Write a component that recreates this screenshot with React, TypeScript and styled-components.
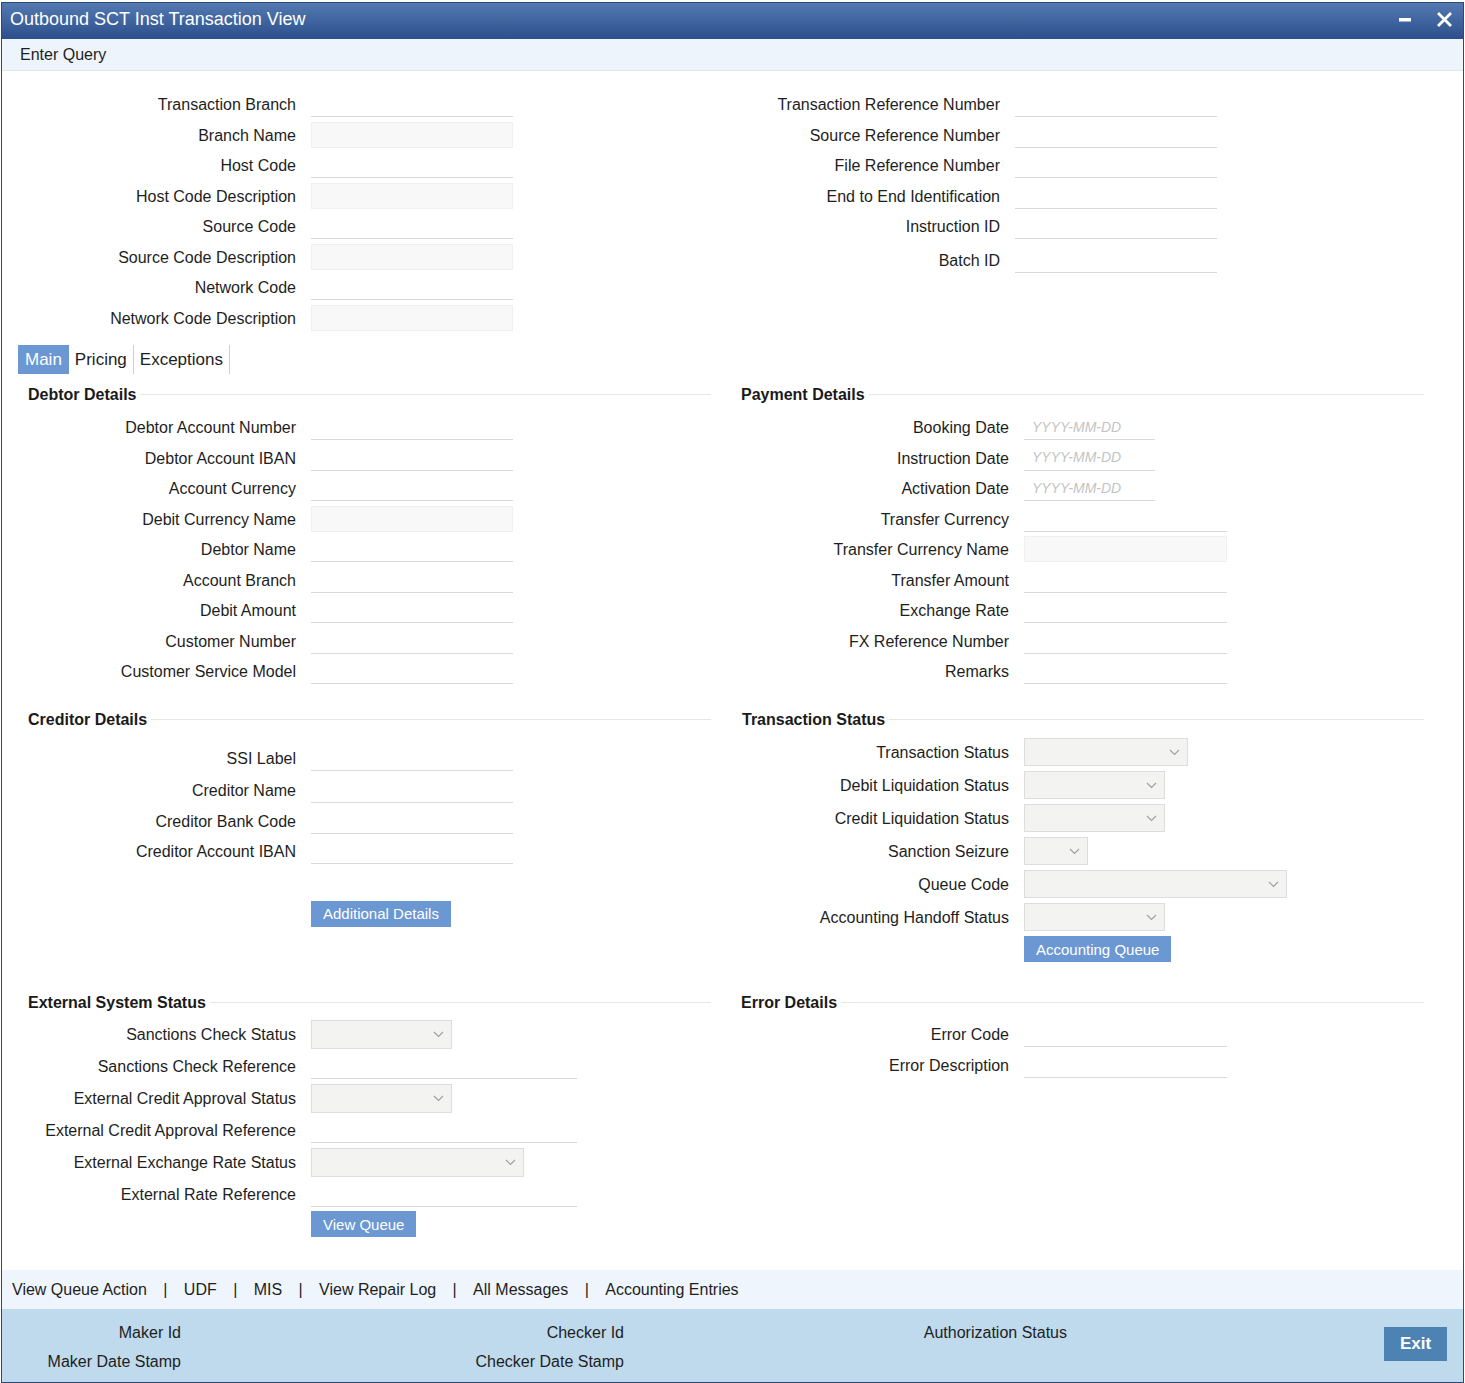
import React from 'react';
import styled, { createGlobalStyle } from 'styled-components';

const Global = createGlobalStyle`
  html, body { margin: 0; padding: 0; background: #ffffff; }
  body { font-family: "Liberation Sans", Arial, sans-serif; color: #1e1e1e; }
  * { box-sizing: border-box; }
`;

const Window = styled.div`
  margin: 2px 1px 0 1px;
  height: 1381px;
  border: 1px solid #2b4a78;
  display: flex;
  flex-direction: column;
  background: #fff;
`;

const TitleBar = styled.div`
  height: 36px;
  flex-shrink: 0;
  background: linear-gradient(#5479b2, #2c4f8b);
  display: flex;
  align-items: center;
  padding: 0 11px 0 8px;
  color: #fff;
  font-size: 18px;
`;

const TitleText = styled.div`
  flex: 1;
  margin-top: -3px;
`;

const TitleIcons = styled.div`
  display: flex;
  align-items: center;
  gap: 26px;
  margin-top: -3px;
`;

const Toolbar = styled.div`
  height: 32px;
  flex-shrink: 0;
  background: #eef4fc;
  border-bottom: 1px solid #e1e6ec;
  display: flex;
  align-items: center;
  padding-left: 18px;
  font-size: 16px;
`;

const Content = styled.div`
  flex: 1;
  padding: 18px 38px 0 16px;
`;

const TwoCol = styled.div`
  display: grid;
  grid-template-columns: 693px 693px;
  column-gap: 20px;
  align-items: start;
`;

const Column = styled.div`
  display: flex;
  flex-direction: column;
`;

const Row = styled.div<{ $labelW?: number; $h?: number; $mt?: number }>`
  display: grid;
  grid-template-columns: ${(p) => p.$labelW ?? 278}px auto;
  column-gap: 15px;
  align-items: center;
  justify-items: start;
  height: ${(p) => p.$h ?? 30.5}px;
  margin-top: ${(p) => p.$mt ?? 0}px;
`;

const Label = styled.div`
  justify-self: end;
  text-align: right;
  white-space: nowrap;
  font-size: 16px;
  padding-top: 2px;
  color: #1e1e1e;
`;

const Field = styled.input<{ $w: number; $ro?: boolean }>`
  width: ${(p) => p.$w}px;
  height: 26px;
  margin: 0;
  padding: 0 8px;
  font-family: "Liberation Sans", Arial, sans-serif;
  font-size: 14px;
  outline: none;
  border: ${(p) => (p.$ro ? '1px solid #f0f0f0' : 'none')};
  border-bottom: 1px solid ${(p) => (p.$ro ? '#efefef' : '#d9d9d9')};
  background: ${(p) => (p.$ro ? '#f8f8f8' : '#ffffff')};
  &::placeholder {
    color: #c3c3c3;
    font-style: italic;
  }
`;

const SelectBox = styled.div<{ $w: number; $h?: number }>`
  width: ${(p) => p.$w}px;
  height: ${(p) => p.$h ?? 28}px;
  background: #f3f3f2;
  border: 1px solid #dddddd;
  display: flex;
  align-items: center;
  justify-content: flex-end;
  padding-right: 7px;
`;

const Tabs = styled.div`
  display: flex;
  height: 29px;
  margin-top: 12px;
`;

const Tab = styled.div<{ $active?: boolean }>`
  display: flex;
  align-items: center;
  font-size: 17px;
  padding: 1px ${(p) => (p.$active ? 7 : 6)}px 0;
  background: ${(p) => (p.$active ? '#6b97d3' : 'transparent')};
  color: ${(p) => (p.$active ? '#ffffff' : '#1e1e1e')};
  border-right: ${(p) => (p.$active ? 'none' : '1px solid #cfcfcf')};
`;

const Section = styled.div<{ $mt: number }>`
  display: flex;
  flex-direction: column;
  margin-top: ${(p) => p.$mt}px;
`;

const SectionHeader = styled.div<{ $mb: number }>`
  display: flex;
  align-items: center;
  height: 20px;
  padding-left: 10px;
  margin-bottom: ${(p) => p.$mb}px;
`;

const Legend = styled.span<{ $ml?: number }>`
  font-size: 16px;
  font-weight: bold;
  color: #1a1a1a;
  padding-top: 2px;
  margin-left: ${(p) => p.$ml ?? 0}px;
`;

const Rule = styled.div`
  flex: 1;
  height: 1px;
  background: #e6e6e6;
  margin-left: 4px;
`;

const ButtonRow = styled.div<{ $mt: number }>`
  display: flex;
  padding-left: 293px;
  margin-top: ${(p) => p.$mt}px;
`;

const ActionButton = styled.button`
  height: 26px;
  padding: 0 12px;
  border: none;
  background: #6b97d3;
  color: #fff;
  font-family: "Liberation Sans", Arial, sans-serif;
  font-size: 15px;
  cursor: pointer;
`;

const LinkBar = styled.div`
  height: 39px;
  flex-shrink: 0;
  background: #eef5fd;
  display: flex;
  align-items: center;
  padding-left: 10px;
  gap: 16.4px;
  font-size: 16px;
`;

const LinkItem = styled.span`
  color: #1e1e1e;
  cursor: pointer;
`;

const Sep = styled.span`
  color: #1e1e1e;
`;

const AuditPanel = styled.div`
  height: 73px;
  flex-shrink: 0;
  background: #bfdaed;
  display: flex;
  align-items: flex-start;
  padding-top: 9px;
`;

const AuditBlock = styled.div`
  width: 443px;
  display: flex;
  flex-direction: column;
`;

const AuditLine = styled.div`
  display: grid;
  grid-template-columns: 179px auto;
  height: 29px;
  align-items: center;
  font-size: 16px;
`;

const AuditLabel = styled.div`
  text-align: right;
  white-space: nowrap;
  color: #1e1e1e;
`;

const ExitButton = styled.button`
  margin-left: auto;
  margin-right: 16px;
  margin-top: 9px;
  width: 63px;
  height: 34px;
  border: none;
  background: #4d83b2;
  color: #fff;
  font-family: "Liberation Sans", Arial, sans-serif;
  font-size: 17px;
  font-weight: bold;
  cursor: pointer;
`;

const Chevron = () => (
  <svg width="11" height="7" viewBox="0 0 11 7">
    <path d="M1 1 L5.5 5.5 L10 1" fill="none" stroke="#a0a0a0" strokeWidth="1.2" />
  </svg>
);

type F =
  | { label: string; kind: 'input'; w: number; ro?: boolean; date?: boolean; mt?: number; h?: number }
  | { label: string; kind: 'select'; w: number; sh?: number; h?: number };

const renderRows = (rows: F[], labelW: number, defH: number) =>
  rows.map((r) => (
    <Row key={r.label} $labelW={labelW} $h={r.h ?? defH} $mt={r.kind === 'input' ? r.mt : 0}>
      <Label>{r.label}</Label>
      {r.kind === 'input' ? (
        <Field $w={r.w} $ro={r.ro} readOnly={r.ro} placeholder={r.date ? 'YYYY-MM-DD' : undefined} />
      ) : (
        <SelectBox $w={r.w} $h={r.sh}>
          <Chevron />
        </SelectBox>
      )}
    </Row>
  ));

const topLeft: F[] = [
  { label: 'Transaction Branch', kind: 'input', w: 202 },
  { label: 'Branch Name', kind: 'input', w: 202, ro: true },
  { label: 'Host Code', kind: 'input', w: 202 },
  { label: 'Host Code Description', kind: 'input', w: 202, ro: true },
  { label: 'Source Code', kind: 'input', w: 202 },
  { label: 'Source Code Description', kind: 'input', w: 202, ro: true },
  { label: 'Network Code', kind: 'input', w: 202 },
  { label: 'Network Code Description', kind: 'input', w: 202, ro: true },
];

const topRight: F[] = [
  { label: 'Transaction Reference Number', kind: 'input', w: 202 },
  { label: 'Source Reference Number', kind: 'input', w: 202 },
  { label: 'File Reference Number', kind: 'input', w: 202 },
  { label: 'End to End Identification', kind: 'input', w: 202 },
  { label: 'Instruction ID', kind: 'input', w: 202 },
  { label: 'Batch ID', kind: 'input', w: 202, mt: 3.5 },
];

const debtor: F[] = [
  { label: 'Debtor Account Number', kind: 'input', w: 202 },
  { label: 'Debtor Account IBAN', kind: 'input', w: 202 },
  { label: 'Account Currency', kind: 'input', w: 202 },
  { label: 'Debit Currency Name', kind: 'input', w: 202, ro: true },
  { label: 'Debtor Name', kind: 'input', w: 202 },
  { label: 'Account Branch', kind: 'input', w: 202 },
  { label: 'Debit Amount', kind: 'input', w: 202 },
  { label: 'Customer Number', kind: 'input', w: 202 },
  { label: 'Customer Service Model', kind: 'input', w: 202 },
];

const payment: F[] = [
  { label: 'Booking Date', kind: 'input', w: 131, date: true },
  { label: 'Instruction Date', kind: 'input', w: 131, date: true },
  { label: 'Activation Date', kind: 'input', w: 131, date: true },
  { label: 'Transfer Currency', kind: 'input', w: 203 },
  { label: 'Transfer Currency Name', kind: 'input', w: 203, ro: true },
  { label: 'Transfer Amount', kind: 'input', w: 203 },
  { label: 'Exchange Rate', kind: 'input', w: 203 },
  { label: 'FX Reference Number', kind: 'input', w: 203 },
  { label: 'Remarks', kind: 'input', w: 203 },
];

const creditor: F[] = [
  { label: 'SSI Label', kind: 'input', w: 202, h: 34 },
  { label: 'Creditor Name', kind: 'input', w: 202, h: 31 },
  { label: 'Creditor Bank Code', kind: 'input', w: 202 },
  { label: 'Creditor Account IBAN', kind: 'input', w: 202 },
];

const txnStatus: F[] = [
  { label: 'Transaction Status', kind: 'select', w: 164 },
  { label: 'Debit Liquidation Status', kind: 'select', w: 141 },
  { label: 'Credit Liquidation Status', kind: 'select', w: 141 },
  { label: 'Sanction Seizure', kind: 'select', w: 64 },
  { label: 'Queue Code', kind: 'select', w: 263 },
  { label: 'Accounting Handoff Status', kind: 'select', w: 141 },
];

const external: F[] = [
  { label: 'Sanctions Check Status', kind: 'select', w: 141, sh: 29 },
  { label: 'Sanctions Check Reference', kind: 'input', w: 266 },
  { label: 'External Credit Approval Status', kind: 'select', w: 141, sh: 29 },
  { label: 'External Credit Approval Reference', kind: 'input', w: 266 },
  { label: 'External Exchange Rate Status', kind: 'select', w: 213, sh: 29 },
  { label: 'External Rate Reference', kind: 'input', w: 266 },
];

const errors: F[] = [
  { label: 'Error Code', kind: 'input', w: 203 },
  { label: 'Error Description', kind: 'input', w: 203 },
];

const links = ['View Queue Action', 'UDF', 'MIS', 'View Repair Log', 'All Messages', 'Accounting Entries'];

export default function App() {
  return (
    <>
      <Global />
      <Window>
        <TitleBar>
          <TitleText>Outbound SCT Inst Transaction View</TitleText>
          <TitleIcons>
            <svg width="12" height="4" viewBox="0 0 12 4">
              <rect x="0" y="0" width="12" height="3.5" fill="#ffffff" />
            </svg>
            <svg width="15" height="15" viewBox="0 0 15 15">
              <path d="M2 2 L13 13 M13 2 L2 13" stroke="#ffffff" strokeWidth="2.8" strokeLinecap="square" />
            </svg>
          </TitleIcons>
        </TitleBar>
        <Toolbar>Enter Query</Toolbar>
        <Content>
          <TwoCol>
            <Column>{renderRows(topLeft, 278, 30.5)}</Column>
            <Column>{renderRows(topRight, 269, 30.5)}</Column>
          </TwoCol>

          <Tabs>
            <Tab $active>Main</Tab>
            <Tab>Pricing</Tab>
            <Tab>Exceptions</Tab>
          </Tabs>

          <TwoCol>
            <Section $mt={10}>
              <SectionHeader $mb={7.75}>
                <Legend>Debtor Details</Legend>
                <Rule />
              </SectionHeader>
              {renderRows(debtor, 278, 30.5)}
            </Section>
            <Section $mt={10}>
              <SectionHeader $mb={7.75}>
                <Legend>Payment Details</Legend>
                <Rule />
              </SectionHeader>
              {renderRows(payment, 278, 30.5)}
            </Section>

            <Section $mt={22.75}>
              <SectionHeader $mb={11.75}>
                <Legend>Creditor Details</Legend>
                <Rule />
              </SectionHeader>
              {renderRows(creditor, 278, 30)}
              <ButtonRow $mt={35}>
                <ActionButton>Additional Details</ActionButton>
              </ButtonRow>
            </Section>
            <Section $mt={22.75}>
              <SectionHeader $mb={6.5}>
                <Legend $ml={1}>Transaction Status</Legend>
                <Rule />
              </SectionHeader>
              {renderRows(txnStatus, 278, 33)}
              <ButtonRow $mt={2.5}>
                <ActionButton>Accounting Queue</ActionButton>
              </ButtonRow>
            </Section>

            <Section $mt={30}>
              <SectionHeader $mb={6}>
                <Legend>External System Status</Legend>
                <Rule />
              </SectionHeader>
              {renderRows(external, 278, 32)}
              <ButtonRow $mt={1}>
                <ActionButton>View Queue</ActionButton>
              </ButtonRow>
            </Section>
            <Section $mt={30}>
              <SectionHeader $mb={6.5}>
                <Legend>Error Details</Legend>
                <Rule />
              </SectionHeader>
              {renderRows(errors, 278, 31)}
            </Section>
          </TwoCol>
        </Content>

        <LinkBar>
          {links.map((l, i) => (
            <React.Fragment key={l}>
              {i > 0 && <Sep>|</Sep>}
              <LinkItem>{l}</LinkItem>
            </React.Fragment>
          ))}
        </LinkBar>

        <AuditPanel>
          <AuditBlock>
            <AuditLine>
              <AuditLabel>Maker Id</AuditLabel>
            </AuditLine>
            <AuditLine>
              <AuditLabel>Maker Date Stamp</AuditLabel>
            </AuditLine>
          </AuditBlock>
          <AuditBlock>
            <AuditLine>
              <AuditLabel>Checker Id</AuditLabel>
            </AuditLine>
            <AuditLine>
              <AuditLabel>Checker Date Stamp</AuditLabel>
            </AuditLine>
          </AuditBlock>
          <AuditBlock>
            <AuditLine>
              <AuditLabel>Authorization Status</AuditLabel>
            </AuditLine>
          </AuditBlock>
          <ExitButton>Exit</ExitButton>
        </AuditPanel>
      </Window>
    </>
  );
}
